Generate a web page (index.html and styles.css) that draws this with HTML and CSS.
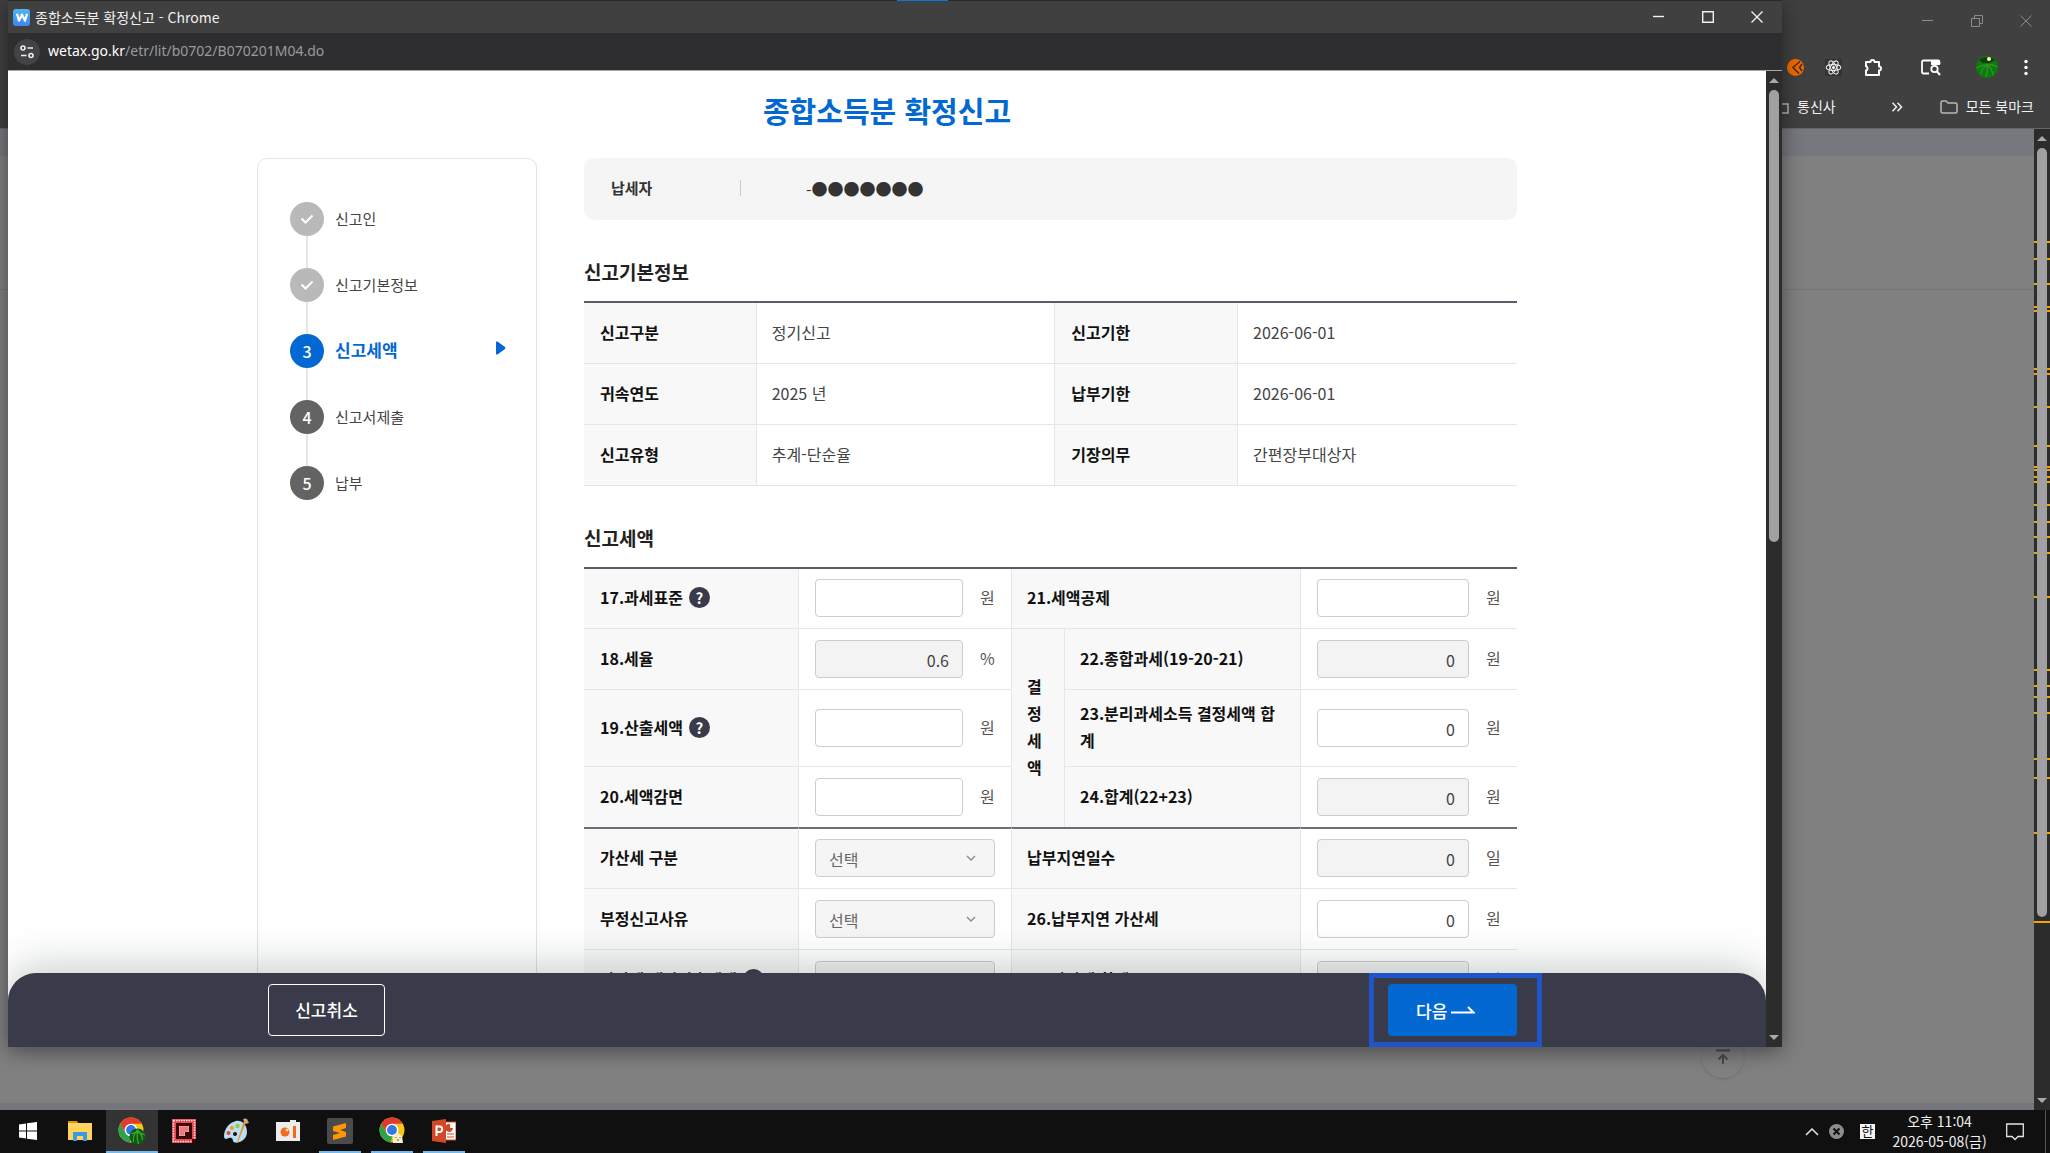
FILE: index.html
```html
<!DOCTYPE html>
<html lang="ko">
<head>
<meta charset="utf-8">
<meta name="viewport" content="width=device-width, initial-scale=1">
<title>종합소득분 확정신고</title>
<link rel="stylesheet" href="styles.css">
</head>
<body>
<div class="desktop">
  <div class="browser">
    <div class="browser-head">
      <div class="win-controls win-controls-dim">
        <svg width="12" height="12" viewBox="0 0 12 12"><path d="M0 5.5h11"/></svg>
        <svg width="12" height="12" viewBox="0 0 12 12"><path d="M.5 3.500h8v8h-8zM3.500 3.500v-3h8v8h-3"/></svg>
        <svg width="12" height="12" viewBox="0 0 12 12"><path d="M.5.5l11 11M11.500.5l-11 11"/></svg>
      </div>
      <div class="toolbar">
        <svg class="ext ext-orange" width="17" height="17" viewBox="0 0 17 17"><circle cx="8.500" cy="8.500" r="8.500" fill="#f06a00"/><path d="M13 2.500L6 8.500l6 6M15 5l-2.500 3.500L15 12" fill="none" stroke="#3a2a20" stroke-width="1.500"/></svg>
        <svg class="ext ext-react" width="17" height="17" viewBox="0 0 17 17"><rect width="17" height="17" fill="#333"/><g fill="none" stroke="#e8e8e8" stroke-width="1.100"><ellipse cx="8.500" cy="8.500" rx="7.300" ry="2.900"/><ellipse cx="8.500" cy="8.500" rx="7.300" ry="2.900" transform="rotate(60 8.500 8.500)"/><ellipse cx="8.500" cy="8.500" rx="7.300" ry="2.900" transform="rotate(120 8.500 8.500)"/></g><circle cx="8.500" cy="8.500" r="1.500" fill="#fff"/></svg>
        <svg class="ext ext-puzzle" width="19" height="19" viewBox="0 0 19 19"><path d="M2 4h4.500a2 2 0 0 1 4 0H15v4.500a2 2 0 0 1 0 4V17H2v-4.500a2.200 2.200 0 0 0 0-4.200z" fill="none" stroke="#fff" stroke-width="2" stroke-linejoin="round"/></svg>
        <svg class="ext ext-search" width="20" height="17" viewBox="0 0 20 17"><path d="M8 14.500H2.500a1.500 1.500 0 0 1-1.500-1.500V3A1.500 1.500 0 0 1 2.500 1.500H17A1.500 1.500 0 0 1 18.500 3v2" fill="none" stroke="#fff" stroke-width="1.800"/><path d="M10 1h9v5h-9z" fill="#fff"/><circle cx="13.500" cy="10" r="3.200" fill="none" stroke="#fff" stroke-width="1.800"/><path d="M16 12.500l3 3.500" stroke="#fff" stroke-width="2"/></svg>
        <svg class="ext ext-avatar" width="22" height="22" viewBox="0 0 22 22"><circle cx="11" cy="11" r="11" fill="#0d7a0d"/><path d="M3 4Q11-2 19 4l-5 3H7z" fill="#143c0a"/><circle cx="13" cy="3" r="2" fill="#f3f3c0"/><path d="M11 9Q6 11 5 18M11 9q1 6-1 12M11 9q5 3 6 10M11 9q5-1 10 2M11 9Q6 8 1 12" fill="none" stroke="#2c9a1f" stroke-width="1.300"/></svg>
        <svg class="ext" width="4" height="17" viewBox="0 0 4 17" fill="#fff"><circle cx="2" cy="2.500" r="1.700"/><circle cx="2" cy="8.500" r="1.700"/><circle cx="2" cy="14.500" r="1.700"/></svg>
      </div>
      <div class="bookmarks">
        <a href="#" class="bookmark"><svg width="17" height="13" viewBox="0 0 17 13"><path d="M1 1h5l2 2h8v9H1z"/></svg><span>통신사</span></a>
        <svg class="more" width="12" height="10" viewBox="0 0 12 10"><path d="M1.500.8L5.500 5l-4 4.200M6.500.8l4 4.200-4 4.200"/></svg>
        <a href="#" class="bookmark"><svg width="18" height="14" viewBox="0 0 18 14"><path d="M1 2.500Q1 1 2.500 1H6l2 2h7.500Q17 3 17 4.500v7q0 1.500-1.500 1.500h-13Q1 13 1 11.500z"/></svg><span>모든 북마크</span></a>
      </div>
    </div>
    <div class="browser-body">
      <div class="browser-page">
        <button class="to-top" type="button" aria-label="맨 위로"><svg width="14" height="16" viewBox="0 0 14 16"><path d="M0 1.500h14M7 15V6M2.500 10.500L7 6l4.500 4.500"/></svg></button>
      </div>
      <div class="scrollbar">
        <svg class="marks" width="16" height="980"><path d="M0 113h16M0 130h16M0 155h16M0 178h16M0 182h16M0 240h16M0 245h16M0 278h16M0 317h16M0 338h16M0 341h16M0 348h16M0 353h16M0 376h16M0 393h16M0 408h16M0 424h16M0 468h16M0 541h16M0 557h16M0 568h16M0 584h16M0 630h16M0 649h16M0 704h16M0 793h16"/></svg>
        <span class="arrow arrow-up"></span>
        <span class="thumb thumb-outer"></span>
        <span class="arrow arrow-down"></span>
      </div>
    </div>
  </div>

  <div class="popup">
    <div class="popup-title">
      <span class="favicon"><svg width="12" height="9" viewBox="0 0 12 9"><path d="M1 .8l2 7L6 1.500l3 6.300 2-7" fill="none" stroke="#fff" stroke-width="2.200" stroke-linejoin="round"/></svg></span>
      <span class="popup-name">종합소득분 확정신고 - Chrome</span>
      <div class="win-controls">
        <svg width="12" height="12" viewBox="0 0 12 12"><path d="M0 5.500h11"/></svg>
        <svg width="12" height="12" viewBox="0 0 12 12"><path d="M.7.7h10.600v10.600H.7z"/></svg>
        <svg width="12" height="12" viewBox="0 0 12 12"><path d="M.5.5l11 11M11.500.5l-11 11"/></svg>
      </div>
    </div>
    <div class="popup-url">
      <span class="site-info"><svg width="14" height="14" viewBox="0 0 14 14"><circle cx="3" cy="3" r="2"/><path d="M7.500 3H13M1 10.500h5.500"/><circle cx="11" cy="10.500" r="2"/></svg></span>
      <span class="url"><b>wetax.go.kr</b>/etr/lit/b0702/B070201M04.do</span>
    </div>
    <div class="popup-body">
      <div class="viewport">
        <div class="content">
          <h1>종합소득분 확정신고</h1>
          <div class="columns">
            <nav class="steps">
              <ol>
                <li class="step done"><span class="dot"><svg width="14" height="10" viewBox="0 0 14 10"><path d="M1.500 4.500l4 4 7-7"/></svg></span><span class="step-name">신고인</span></li>
                <li class="step done"><span class="dot"><svg width="14" height="10" viewBox="0 0 14 10"><path d="M1.500 4.500l4 4 7-7"/></svg></span><span class="step-name">신고기본정보</span></li>
                <li class="step current"><span class="dot">3</span><span class="step-name">신고세액</span><svg class="pointer" width="10" height="14" viewBox="0 0 10 14"><path d="M0 1.500Q0 0 1.500.600L9 6q1 1 0 2l-7.500 5.400Q0 14 0 12.500z"/></svg></li>
                <li class="step"><span class="dot">4</span><span class="step-name">신고서제출</span></li>
                <li class="step"><span class="dot">5</span><span class="step-name">납부</span></li>
              </ol>
            </nav>
            <main>
              <div class="taxpayer"><span class="taxpayer-label">납세자</span><span class="taxpayer-id">-●●●●●●●</span></div>

              <h2>신고기본정보</h2>
              <table class="info">
                <colgroup><col class="i1"><col class="i2"><col class="i3"><col class="i4"></colgroup>
                <tbody>
                  <tr><th scope="row">신고구분</th><td>정기신고</td><th scope="row">신고기한</th><td>2026-06-01</td></tr>
                  <tr><th scope="row">귀속연도</th><td>2025 년</td><th scope="row">납부기한</th><td>2026-06-01</td></tr>
                  <tr><th scope="row">신고유형</th><td>추계-단순율</td><th scope="row">기장의무</th><td>간편장부대상자</td></tr>
                </tbody>
              </table>

              <h2>신고세액</h2>
              <table class="tax">
                <colgroup><col class="t1"><col class="t2"><col class="t3"><col class="t4"><col class="t5"></colgroup>
                <tbody class="amounts">
                  <tr>
                    <th scope="row"><label for="f17">17.과세표준</label><button class="help" type="button" aria-label="도움말">?</button></th>
                    <td><div class="field"><input id="f17" type="text"><span>원</span></div></td>
                    <th scope="row" colspan="2"><label for="f21">21.세액공제</label></th>
                    <td><div class="field"><input id="f21" type="text"><span>원</span></div></td>
                  </tr>
                  <tr>
                    <th scope="row"><label for="f18">18.세율</label></th>
                    <td><div class="field"><input id="f18" type="text" value="0.6" readonly><span>%</span></div></td>
                    <th scope="rowgroup" rowspan="3">결정세액</th>
                    <th scope="row"><label for="f22">22.종합과세(19-20-21)</label></th>
                    <td><div class="field"><input id="f22" type="text" value="0" readonly><span>원</span></div></td>
                  </tr>
                  <tr>
                    <th scope="row"><label for="f19">19.산출세액</label><button class="help" type="button" aria-label="도움말">?</button></th>
                    <td><div class="field"><input id="f19" type="text"><span>원</span></div></td>
                    <th scope="row"><label for="f23">23.분리과세소득 결정세액 합계</label></th>
                    <td><div class="field"><input id="f23" type="text" value="0"><span>원</span></div></td>
                  </tr>
                  <tr>
                    <th scope="row"><label for="f20">20.세액감면</label></th>
                    <td><div class="field"><input id="f20" type="text"><span>원</span></div></td>
                    <th scope="row"><label for="f24">24.합계(22+23)</label></th>
                    <td><div class="field"><input id="f24" type="text" value="0" readonly><span>원</span></div></td>
                  </tr>
                </tbody>
                <tbody class="penalty">
                  <tr>
                    <th scope="row"><label for="kind">가산세 구분</label></th>
                    <td><div class="select"><select id="kind" disabled><option>선택</option></select><svg width="10" height="6" viewBox="0 0 10 6"><path d="M1 1l4 4 4-4"/></svg></div></td>
                    <th scope="row" colspan="2"><label for="days">납부지연일수</label></th>
                    <td><div class="field"><input id="days" type="text" value="0" readonly><span>일</span></div></td>
                  </tr>
                  <tr>
                    <th scope="row"><label for="reason">부정신고사유</label></th>
                    <td><div class="select"><select id="reason" disabled><option>선택</option></select><svg width="10" height="6" viewBox="0 0 10 6"><path d="M1 1l4 4 4-4"/></svg></div></td>
                    <th scope="row" colspan="2"><label for="f26">26.납부지연 가산세</label></th>
                    <td><div class="field"><input id="f26" type="text" value="0"><span>원</span></div></td>
                  </tr>
                  <tr>
                    <th scope="row"><label for="base">가산세 대상산출세액</label><button class="help" type="button" aria-label="도움말">?</button></th>
                    <td><div class="select"><input id="base" type="text" readonly></div></td>
                    <th scope="row" colspan="2"><label for="f27">27.가산세 합계</label></th>
                    <td><div class="field"><input id="f27" type="text" readonly><span>원</span></div></td>
                  </tr>
                </tbody>
              </table>
            </main>
          </div>
        </div>
        <div class="actions">
          <div class="actions-inner">
            <button class="btn btn-cancel" type="button">신고취소</button>
            <div class="highlight"><button class="btn btn-next" type="button">다음<svg width="24" height="8" viewBox="0 0 24 8"><path d="M0 6.500h22.500L17 1"/></svg></button></div>
          </div>
        </div>
      </div>
      <div class="scrollbar">
        <span class="arrow arrow-up"></span>
        <span class="thumb thumb-inner"></span>
        <span class="arrow arrow-down"></span>
      </div>
    </div>
  </div>
  <div class="top-handle"></div>
</div>

<footer class="taskbar">
  <div class="apps">
    <a href="#" class="app" aria-label="시작"><svg width="18" height="18" viewBox="0 0 18 18" fill="#fff"><path d="M0 2.500l7-1v7H0zM8 1.300L18 0v8.500H8zM0 9.500h7v7l-7-1zM8 9.500h10V18L8 16.700z"/></svg></a>
    <a href="#" class="app" aria-label="파일 탐색기"><svg width="24" height="22" viewBox="0 0 24 22"><path d="M0 1h9l2 3H0z" fill="#d99a00"/><path d="M0 3h24v17H0z" fill="#ffd35c"/><path d="M5 21v-9h14v9h-4v-5H9v5z" fill="#3c9be0"/></svg></a>
    <a href="#" class="app active" aria-label="Chrome"><svg width="28" height="28" viewBox="0 0 28 28"><circle cx="13" cy="13" r="12.500" fill="#f9c61a"/><path d="M2.200 6.800a12.500 12.500 0 0 1 21.600 0H13l-5.400 9.400z" fill="#e23a2e"/><path d="M2.200 6.800L7.600 16.200 13 19.200l-1 6.200A12.500 12.500 0 0 1 2.200 6.800z" fill="#2ba24c"/><circle cx="13" cy="13" r="6.300" fill="#fff"/><circle cx="13" cy="13" r="4.900" fill="#3478e8"/><circle cx="19.500" cy="19.500" r="8" fill="#0d5a12"/><path d="M19.500 13q-5 5-4 12M19.500 13q-1 8 1 14M19.500 13q5 5 5 10M13 17q6-3 14 1" fill="none" stroke="#3fa82c" stroke-width="1.200"/></svg></a>
    <a href="#" class="app" aria-label="픽셀 편집기"><svg width="24" height="24" viewBox="0 0 24 24"><rect width="24" height="24" fill="#e24a50"/><rect x="1.500" y="1.500" width="21" height="21" fill="none" stroke="#ffd9d9" stroke-width="1.500" stroke-dasharray="1.500 1"/><rect x="4" y="4" width="16" height="16" fill="#3a0508"/><path d="M7 7h10v6h-4v4H7z" fill="#ffb5b5"/><path d="M7 9h10M7 11h10M7 13h6M7 15h6M9 7v10M11 7v10M13 7v6M15 7v6" stroke="#d4444a" stroke-width=".6"/><rect x="20" y="20" width="4" height="4" fill="#400"/></svg></a>
    <a href="#" class="app" aria-label="그림판"><svg width="26" height="26" viewBox="0 0 26 26"><path d="M13 3C5 5 1 12 1 18c0 4 3 3 5 2s4 0 4 3c1 4 14 1 14-9C24 7 19 2 13 3z" fill="#b9dff2"/><circle cx="5.500" cy="15" r="2" fill="#e0483e"/><circle cx="9" cy="10" r="2" fill="#f39a2b"/><circle cx="14.500" cy="8" r="2.200" fill="#8fce3c"/><circle cx="12" cy="16" r="2" fill="#111"/><path d="M23 4L15 24l-1 1 1-4L21 3z" fill="#e8912c"/><path d="M20 1q3-1 4 0l2 4-4 1z" fill="#caa878"/></svg></a>
    <a href="#" class="app" aria-label="화면 녹화"><svg width="24" height="22" viewBox="0 0 24 22"><path d="M0 2h14V0h6v2h4v19H0z" fill="#ececec"/><circle cx="9" cy="12" r="4.500" fill="#f06a1a"/><circle cx="11" cy="10" r="1.500" fill="#ffd9bd"/><rect x="17" y="6" width="3" height="12" fill="#f06a1a"/></svg></a>
    <a href="#" class="app open" aria-label="Sublime Text"><svg width="26" height="26" viewBox="0 0 26 26"><rect width="26" height="26" rx="2" fill="#4b4b4b"/><path d="M6 8.500L19 5v5l-6 2 6 2v4.500L6 22v-5l7-2-7-2z" fill="#ff9800"/></svg></a>
    <a href="#" class="app open" aria-label="Chrome"><svg width="26" height="27" viewBox="0 0 26 27"><circle cx="13" cy="13" r="12.500" fill="#f9c61a"/><path d="M2.200 6.800a12.500 12.500 0 0 1 21.600 0H13l-5.400 9.400z" fill="#e23a2e"/><path d="M2.200 6.800L7.600 16.200 13 19.200l-1 6.200A12.500 12.500 0 0 1 2.200 6.800z" fill="#2ba24c"/><circle cx="13" cy="13" r="6.300" fill="#fff"/><circle cx="13" cy="13" r="4.900" fill="#3478e8"/><path d="M14 26v-6l4-5 1 1 4 3 1 7z" fill="#fbf0c8"/><path d="M17 20v1M21 20v1M18 23h2" stroke="#554" stroke-width="1"/></svg></a>
    <a href="#" class="app open" aria-label="PowerPoint"><svg width="24" height="24" viewBox="0 0 24 24"><path d="M12 3h12v18H12z" fill="#fff" stroke="#d24726"/><path d="M18 5a4 4 0 1 0 3 4h-3z" fill="#d24726"/><path d="M15 15h7M15 18h7" stroke="#d24726"/><path d="M0 2l14-2v24L0 22z" fill="#d24726"/><path d="M4.500 17V7.500h3a2.700 2.700 0 0 1 0 5.400h-3" fill="none" stroke="#fff" stroke-width="2"/></svg></a>
  </div>
  <div class="tray">
    <svg width="14" height="8" viewBox="0 0 14 8"><path d="M1 7l6-6 6 6" fill="none" stroke="#e4e4e4" stroke-width="1.500"/></svg>
    <svg class="tray-x" width="15" height="15" viewBox="0 0 15 15"><circle cx="7.500" cy="7.500" r="7.500" fill="#8d8d8d"/><path d="M4.500 4.500l6 6M10.500 4.500l-6 6" stroke="#111" stroke-width="2"/></svg>
    <span class="ime">한</span>
    <div class="clock">오후 11:04<br>2026-05-08(금)</div>
    <svg class="notice" width="18" height="18" viewBox="0 0 18 18"><path d="M.700 1h16.600v12.500H12l-3 3-3-3H.700z" fill="none" stroke="#e4e4e4" stroke-width="1.300"/></svg>
    <span class="peek"></span>
  </div>
</footer>
</body>
</html>
```
FILE: styles.css
```css
* { box-sizing: border-box; }
html, body { height: 100%; }
body {
  margin: 0;
  display: flex;
  flex-direction: column;
  overflow: hidden;
  background: #808080;
  font-family: "Noto Sans CJK KR", sans-serif;
  font-size: 16px;
  color: #444;
}
a { color: inherit; text-decoration: none; }
svg { display: block; flex: none; }
button, input, select { font: inherit; color: inherit; margin: 0; }
h1, h2, ol { margin: 0; padding: 0; }

.desktop { position: relative; flex: 1; min-height: 0; }

/* main browser window behind the popup */
.browser { height: 100%; display: flex; flex-direction: column; }
.browser-head {
  height: 129px;
  background: #404040;
  border-bottom: 1px solid #666;
  display: flex;
  flex-direction: column;
  align-items: flex-end;
}
.win-controls {
  display: flex;
  gap: 37px;
  fill: none;
  stroke: #f0f0f0;
  stroke-width: 1.4;
}
.win-controls-dim { padding: 15px 18px 0 0; stroke: #8c8c8c; stroke-width: 1; }
.toolbar {
  display: flex;
  align-items: center;
  height: 22px;
  margin-top: 29px;
  padding-right: 22px;
}
.ext-orange { margin-right: 21px; }
.ext-react { margin-right: 22px; }
.ext-puzzle { margin-right: 38px; }
.ext-search { margin-right: 35px; }
.ext-avatar { margin-right: 26px; }
.bookmarks {
  display: flex;
  align-items: center;
  margin-top: 18px;
  padding-right: 16px;
  font-size: 14px;
  line-height: 20px;
  color: #f0f0f0;
}
.bookmark { display: flex; align-items: center; gap: 8px; }
.bookmark span { padding-bottom: 2px; }
.bookmark svg, .more { fill: none; stroke: #b8b8b8; stroke-width: 1.5; }
.more { margin: 0 37px 0 55px; stroke: #f0f0f0; }
.browser-body {
  flex: 1;
  min-height: 0;
  display: grid;
  grid-template-columns: 1fr 16px;
}
.browser-page {
  position: relative;
  background: linear-gradient(#77787d 27px, transparent 27px, transparent 160px, #757575 160px, #757575 161px, transparent 161px);
  border-bottom: 7px solid #75767c;
}
.to-top {
  position: absolute;
  right: 290px;
  bottom: 25px;
  width: 42px;
  height: 42px;
  display: grid;
  place-items: center;
  border: 0;
  border-radius: 50%;
  background: #808080;
  box-shadow: 0 1px 3px #6e6e6e;
}
.to-top svg { fill: none; stroke: #4a4a55; stroke-width: 2; }

.scrollbar {
  position: relative;
  background: #2c2c2c;
  display: flex;
  flex-direction: column;
  align-items: center;
  padding: 7px 0;
}
.marks { position: absolute; inset: 0; stroke: #f5a300; stroke-width: 2; }
.arrow { border: 5px solid transparent; border-top-width: 0; border-bottom-width: 0; }
.arrow-up { border-bottom: 5px solid #a8a8a8; }
.arrow-down { border-top: 5px solid #a8a8a8; margin-top: auto; }
.thumb {
  position: relative;
  width: 10px;
  margin-top: 7px;
  border-radius: 5px;
  background: #a0a0a0;
}
.thumb-outer { height: calc(80% - 5px); }
.thumb-inner { height: 47%; }

/* popup window */
.popup {
  position: absolute;
  inset: 0 268px 63px 8px;
  display: flex;
  flex-direction: column;
  background: #fff;
  box-shadow: 0 4px 20px rgba(0, 0, 0, .45);
}
.popup-title {
  display: flex;
  align-items: center;
  height: 33px;
  padding: 0 19px 0 5px;
  border-top: 1px solid #2a2a2a;
  background: #404040;
  color: #f0f0f0;
  font-size: 14px;
}
.popup-name { flex: 1; margin-left: 5px; }
.favicon {
  display: grid;
  place-items: center;
  width: 17px;
  height: 17px;
  border-radius: 3px;
  background: linear-gradient(#4cb4ee, #3f86f0);
}
.popup-url {
  display: flex;
  align-items: center;
  gap: 8px;
  height: 38px;
  padding-left: 6px;
  border-bottom: 1px solid #a8a8a8;
  background: #2e2e31;
}
.site-info {
  display: grid;
  place-items: center;
  width: 26px;
  height: 26px;
  border-radius: 50%;
  background: #434346;
}
.site-info svg { fill: none; stroke: #eee; stroke-width: 1.6; }
.url { padding-bottom: 2px; font: 14px/22px "Noto Sans", sans-serif; color: #9a9a9c; }
.url b { font-weight: 400; color: #fff; }
.popup-body {
  flex: 1;
  min-height: 0;
  display: grid;
  grid-template-columns: 1fr 16px;
}
.viewport { position: relative; overflow: hidden; background: #fff; }

.content { max-width: 1260px; margin: 0 auto; padding-top: 19px; }
h1 {
  margin-bottom: 28px;
  font-size: 29px;
  line-height: 40px;
  font-weight: 700;
  text-align: center;
  color: #0468d2;
}
.columns { display: grid; grid-template-columns: 280px 1fr; gap: 47px; }

.steps {
  border: 1px solid #e3e3e3;
  border-radius: 10px;
  padding: 43px 30px 0 32px;
}
.steps ol { list-style: none; }
.step {
  position: relative;
  display: flex;
  align-items: center;
  gap: 11px;
  height: 34px;
  margin-bottom: 32px;
  font-size: 15px;
}
.step:not(:last-child)::after {
  content: "";
  position: absolute;
  left: 16px;
  top: 34px;
  width: 2px;
  height: 32px;
  background: #e6e6e6;
}
.step-name { padding-bottom: 2px; }
.dot {
  display: grid;
  place-items: center;
  width: 34px;
  height: 34px;
  border-radius: 50%;
  background: #636363;
  color: #fff;
  font-size: 16px;
  font-weight: 500;
}
.dot svg { fill: none; stroke: #fff; stroke-width: 2; }
.done .dot { background: #b9b9b9; }
.current { font-size: 17px; font-weight: 700; color: #0468d2; }
.current .dot { background: #0468d2; }
.current .step-name { padding-bottom: 4px; }
.pointer { margin: 0 0 6px auto; fill: #0468d2; }

.taxpayer {
  display: flex;
  align-items: center;
  height: 62px;
  padding: 0 27px 2px;
  border-radius: 10px;
  background: #f5f5f5;
  color: #333;
}
.taxpayer-label {
  width: 130px;
  border-right: 1px solid #ccc;
  font-weight: 700;
  font-size: 15px;
  line-height: 16px;
}
.taxpayer-id { margin-left: 65px; }

h2 {
  margin: 38px 0 15px;
  font-size: 19px;
  line-height: 28px;
  font-weight: 700;
  color: #222;
}

table {
  width: 100%;
  table-layout: fixed;
  border-collapse: separate;
  border-spacing: 0;
  border-top: 2px solid #5c5c68;
  line-height: 27px;
}
th, td {
  height: 61px;
  padding: 11px 16px;
  border-bottom: 1px solid #e6e6e6;
  text-align: left;
}
th, .info td { padding-top: 10px; padding-bottom: 12px; }
th { background: #f8f8f8; color: #111; font-weight: 700; }
th + td, td + th, th + th { border-left: 1px solid #e6e6e6; }
.i1 { width: 170px; }
.i2 { width: 32%; }
.i3 { width: 181px; }
.i4 { width: 30%; }
.info td { padding-left: 15px; }
.t1 { width: 214px; }
.t2 { width: 213px; }
.t3 { width: 53px; }
.t5 { width: 217px; }
.tax th { padding-right: 12px; padding-left: 15px; word-break: break-all; }
.tax tr > th:first-child { padding-left: 16px; }
.tax th[rowspan] { padding-right: 20px; }
.tax tr:first-child > td { padding-top: 10px; }
.tax tr:first-child > * { height: 60px; }
.amounts tr:last-child > *, .amounts th[rowspan] { border-bottom: 0; }
.amounts tr:last-child > * { height: 60px; }
.penalty tr:first-child > * { border-top: 2px solid #6c6c78; height: 62px; }
.help {
  width: 21px;
  height: 21px;
  margin-left: 6px;
  padding: 0;
  border: 0;
  border-radius: 50%;
  background: #3a3a4a;
  color: #fff;
  font-size: 15px;
  line-height: 21px;
  font-weight: 700;
  text-align: center;
}
.field { display: flex; align-items: center; gap: 17px; }
.field span { width: 15px; padding-bottom: 2px; color: #555; }
input, select {
  flex: 1;
  min-width: 0;
  width: 100%;
  height: 38px;
  padding: 2px 13px 0;
  border: 1px solid #ccc;
  border-radius: 4px;
  background: #fff;
  text-align: right;
}
input[readonly] { background: #f3f3f3; }
.select { position: relative; display: flex; }
select {
  appearance: none;
  background: #f5f5f5;
  color: #666;
  text-align: left;
  opacity: 1;
}
.select svg {
  position: absolute;
  right: 19px;
  top: 16px;
  fill: none;
  stroke: #888;
  stroke-width: 1.3;
}

.actions {
  position: absolute;
  inset: auto 0 0;
  border-radius: 28px 28px 0 0;
  background: #3a3b4a;
  box-shadow: 0 -6px 40px rgba(40, 55, 55, .25);
}
.actions-inner {
  display: flex;
  align-items: center;
  justify-content: space-between;
  max-width: 1260px;
  height: 74px;
  margin: 0 auto;
  padding-left: 11px;
}
.btn {
  height: 52px;
  border-radius: 4px;
  font-size: 17px;
  font-weight: 500;
  color: #fff;
}
.btn-cancel { width: 117px; padding: 0 0 1px; border: 1px solid #fff; background: none; }
.highlight {
  margin-right: -25px;
  padding: 6px 20px 6px 14px;
  border: 5px solid #1f55c8;
}
.btn-next {
  display: flex;
  align-items: center;
  gap: 4px;
  width: 129px;
  padding: 0 28px;
  border: 0;
  background: #0468d2;
}
.btn-next svg { fill: none; stroke: #fff; stroke-width: 2; }

.top-handle {
  position: absolute;
  top: 0;
  left: 897px;
  width: 51px;
  height: 1px;
  background: #0a78d4;
}

/* taskbar */
.taskbar {
  display: flex;
  justify-content: space-between;
  height: 43px;
  background: #101010;
}
.apps { display: flex; padding-left: 2px; }
.app {
  display: grid;
  place-items: center;
  width: 52px;
  border-bottom: 2px solid transparent;
}
.app.active { background: #333; border-color: #76b9ed; }
.app.open { background: linear-gradient(#76b9ed, #76b9ed) center bottom / 42px 2px no-repeat border-box; }
.tray { display: flex; align-items: center; color: #f0f0f0; }
.tray-x { margin: 0 16px 0 10px; }
.ime {
  width: 15px;
  height: 15px;
  background: #f4f4f4;
  color: #111;
  font-size: 13px;
  line-height: 14px;
  text-align: center;
}
.clock {
  width: 131px;
  padding: 0 2px 2px 0;
  font-size: 14px;
  line-height: 20px;
  text-align: center;
}
.notice { margin-right: 21px; }
.peek { width: 5px; height: 43px; border-left: 1px solid #555; }
```
